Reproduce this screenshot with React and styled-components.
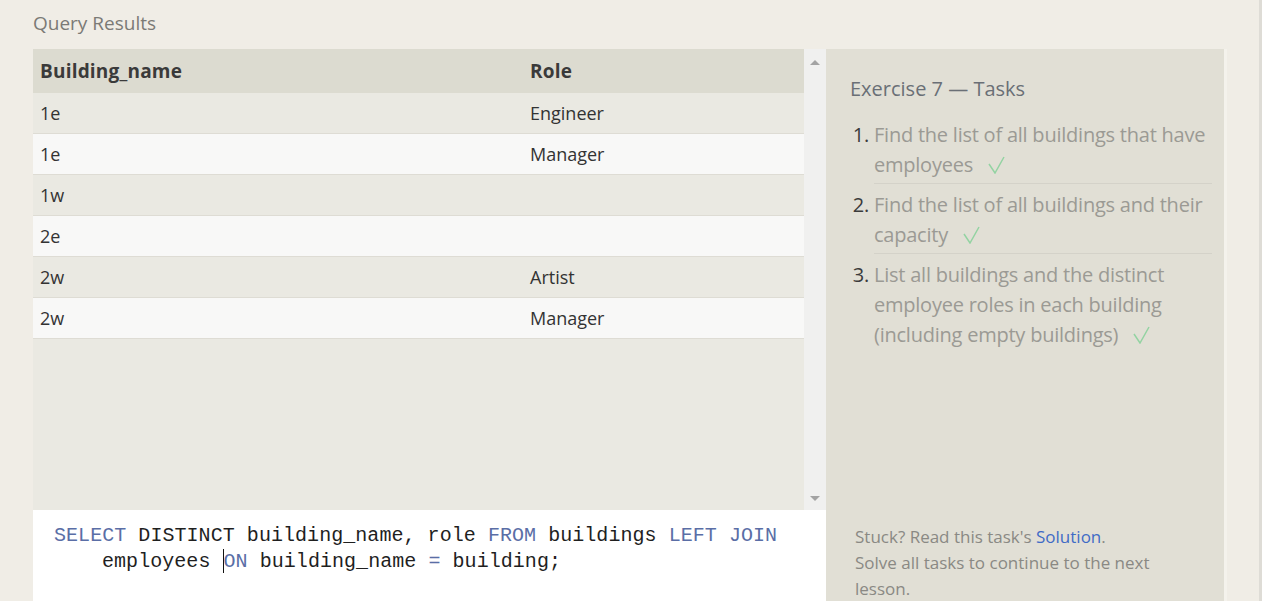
import React from "react";
import styled, { createGlobalStyle } from "styled-components";

const Global = createGlobalStyle`
  html, body { margin: 0; padding: 0; background: #f0ede6; }
  body { font-family: "Open Sans", "Liberation Sans", sans-serif; overflow: hidden; }
`;

const Page = styled.div`
  width: 1262px;
  height: 601px;
  padding: 0 0 0 33px;
  box-sizing: border-box;
  border-right: 3px solid #dedcd6;
  overflow: hidden;
`;

const Title = styled.h2`
  margin: 0;
  padding-top: 9px;
  height: 49px;
  box-sizing: border-box;
  font-weight: 400;
  font-size: 19px;
  line-height: 28px;
  color: #7b7a76;
`;

const Main = styled.div`
  display: flex;
  align-items: flex-start;
`;

const LeftColumn = styled.div`
  width: 793px;
  display: flex;
  flex-direction: column;
`;

const ResultsBox = styled.div`
  height: 461px;
  display: flex;
  background: #eae9e2;
`;

const TableArea = styled.div`
  flex: 1;
`;

const Table = styled.table`
  width: 100%;
  border-collapse: collapse;
  font-size: 18px;
  color: #333;
`;

const HeadCell = styled.th`
  text-align: left;
  font-weight: 700;
  font-size: 19px;
  letter-spacing: 0.2px;
  height: 44px;
  padding: 0 7px;
  background: #dcdbd0;
  color: #3a3a3a;
  width: ${(p) => p.$w || "auto"};
`;

const Row = styled.tr`
  background: ${(p) => (p.$odd ? "#eae9e2" : "#f8f8f7")};
  border-bottom: 1px solid #dedcd4;
`;

const Cell = styled.td`
  height: 40px;
  padding: 0 7px;
`;

const Scrollbar = styled.div`
  width: 22px;
  background: #f0f0ef;
  display: flex;
  flex-direction: column;
  justify-content: space-between;
  align-items: center;
  padding: 11px 0 9px;
  box-sizing: border-box;
`;

const Arrow = styled.div`
  width: 0;
  height: 0;
  border-left: 5px solid transparent;
  border-right: 5px solid transparent;
  ${(p) =>
    p.$down
      ? "border-top: 5px solid #a3a3a3;"
      : "border-bottom: 5px solid #a3a3a3;"}
`;

const Editor = styled.div`
  background: #ffffff;
  height: 120px;
  padding: 13px 20px 0 21px;
  box-sizing: border-box;
  font-family: "Liberation Mono", "DejaVu Sans Mono", monospace;
  font-size: 20px;
  letter-spacing: 0.05px;
  line-height: 26px;
  color: #1f1f1f;
`;

const CodeLine = styled.div`
  white-space: pre;
  padding-left: ${(p) => (p.$indent ? "48px" : "0")};
`;

const Kw = styled.span`
  color: #5a6ea6;
`;

const Caret = styled.span`
  display: inline-block;
  width: 0;
  height: 24px;
  border-left: 1.5px solid #111;
  vertical-align: -6px;
`;

const TaskPanel = styled.div`
  width: 401px;
  height: 581px;
  background: #e1dfd5;
  border-right: 3px solid #f4f2ec;
  box-sizing: border-box;
  padding: 26px 12px 0 24px;
  display: flex;
  flex-direction: column;
`;

const TaskHeading = styled.h3`
  margin: 0;
  font-weight: 400;
  font-size: 20px;
  line-height: 28px;
  color: #6a6f76;
`;

const TaskList = styled.ol`
  margin: 17px 0 0;
  padding: 0 0 0 24px;
  font-size: 20px;
  letter-spacing: -0.23px;
  line-height: 30px;
`;

const TaskItem = styled.li`
  color: #9b9a94;
  padding: ${(p) => (p.$first ? "0" : "6px")} 0 3px;
  border-bottom: ${(p) => (p.$last ? "none" : "1px solid #d4d2c9")};
  &::marker {
    color: #3b3b3b;
  }
`;

const Check = styled.svg`
  margin-left: 15px;
  vertical-align: -2px;
`;

const Footer = styled.div`
  margin-top: auto;
  padding: 0 0 28px 5px;
  font-size: 17px;
  line-height: 26px;
  color: #8a8984;
  width: 320px;
`;

const Link = styled.a`
  color: #3f6bc6;
  text-decoration: none;
`;

const Tick = () => (
  <Check width="17" height="18" viewBox="0 0 17 18">
    <polyline
      points="1,8 7,17 16,1"
      fill="none"
      stroke="#93d3a2"
      strokeWidth="1.5"
    />
  </Check>
);

const rows = [
  ["1e", "Engineer"],
  ["1e", "Manager"],
  ["1w", ""],
  ["2e", ""],
  ["2w", "Artist"],
  ["2w", "Manager"],
];

export default function App() {
  return (
    <>
      <Global />
      <Page>
        <Title>Query Results</Title>
        <Main>
          <LeftColumn>
            <ResultsBox>
              <TableArea>
                <Table>
                  <thead>
                    <tr>
                      <HeadCell $w="476px">Building_name</HeadCell>
                      <HeadCell>Role</HeadCell>
                    </tr>
                  </thead>
                  <tbody>
                    {rows.map(([b, r], i) => (
                      <Row key={i} $odd={i % 2 === 0}>
                        <Cell>{b}</Cell>
                        <Cell>{r}</Cell>
                      </Row>
                    ))}
                  </tbody>
                </Table>
              </TableArea>
              <Scrollbar>
                <Arrow />
                <Arrow $down />
              </Scrollbar>
            </ResultsBox>
            <Editor>
              <CodeLine>
                <Kw>SELECT</Kw> DISTINCT building_name, role <Kw>FROM</Kw>{" "}
                buildings <Kw>LEFT</Kw> <Kw>JOIN</Kw>
              </CodeLine>
              <CodeLine $indent>
                employees <Caret />
                <Kw>ON</Kw> building_name <Kw>=</Kw> building;
              </CodeLine>
            </Editor>
          </LeftColumn>
          <TaskPanel>
            <TaskHeading>Exercise 7 — Tasks</TaskHeading>
            <TaskList>
              <TaskItem $first>
                Find the list of all buildings that have employees
                <Tick />
              </TaskItem>
              <TaskItem>
                Find the list of all buildings and their capacity
                <Tick />
              </TaskItem>
              <TaskItem $last>
                List all buildings and the distinct employee roles in each
                building (including empty buildings)
                <Tick />
              </TaskItem>
            </TaskList>
            <Footer>
              Stuck? Read this task's <Link href="#">Solution</Link>.
              <br />
              Solve all tasks to continue to the next lesson.
            </Footer>
          </TaskPanel>
        </Main>
      </Page>
    </>
  );
}
